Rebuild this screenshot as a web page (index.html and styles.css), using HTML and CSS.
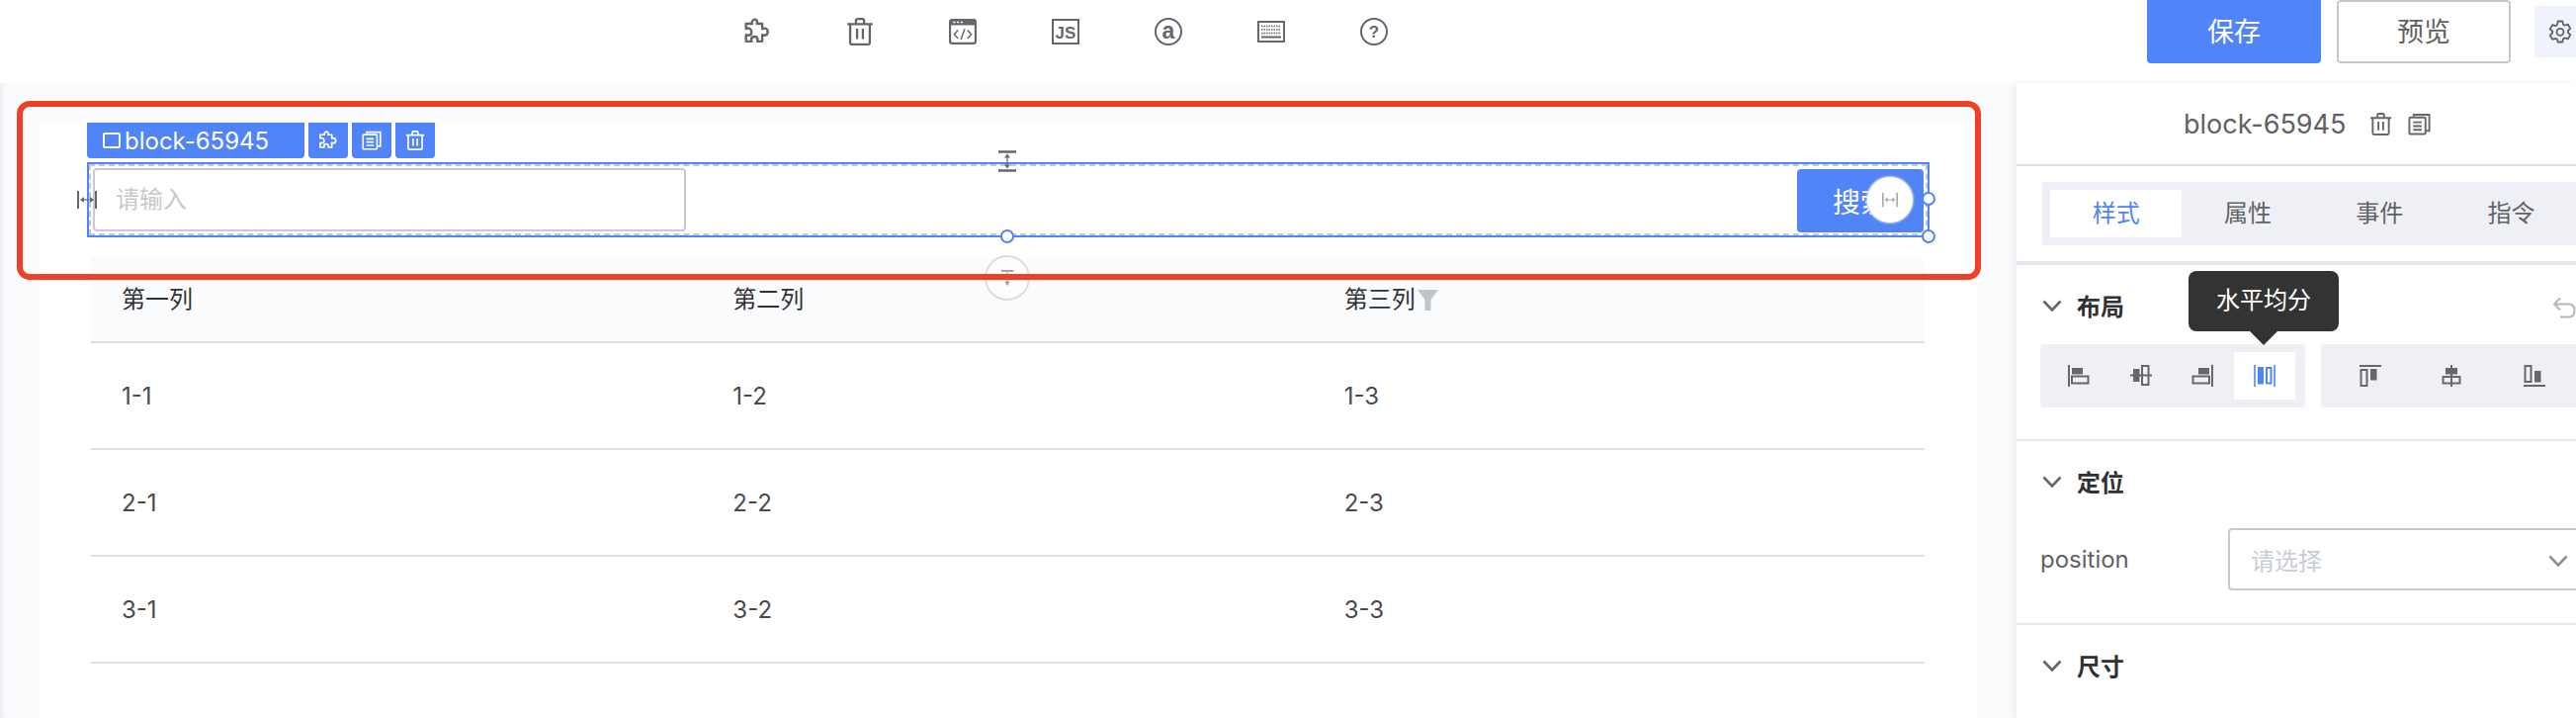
FILE: index.html
```html
<!DOCTYPE html>
<html lang="zh-CN">
<head>
    <meta charset="UTF-8">
    <title>block-65945</title>
    <link rel="stylesheet" href="styles.css">
</head>
<body>
    <svg class="defs" width="0" height="0">
        <defs>
            <symbol id="i-puzzle" viewBox="1 .5 23 23.500">
                <path d="M9 2.500c1.400-1.300 3.600-.5 3.600 1.400 0 .5-.2 1-.4 1.600h4.600v4.400c.6-.3 1.100-.5 1.700-.5 1.900 0 3 1.400 3 3s-1.100 3-3 3c-.6 0-1.100-.2-1.700-.5v5.600h-4.200c.2-.5.3-1 .3-1.400 0-1.700-1.300-2.600-2.700-2.600s-2.700.9-2.700 2.600c0 .4.100.9.300 1.400H3v-5.600c.6.300 1.300.5 1.900.5 1.700 0 2.800-1.300 2.800-2.800S6.600 9.300 4.900 9.300c-.6 0-1.300.2-1.900.5V5.500h5.300C8 4.800 7.800 3.400 9 2.500z" fill="none" stroke="currentColor" stroke-width="2" stroke-linejoin="round"/>
            </symbol>
            <symbol id="i-trash" viewBox="0 0 24 24">
                <path d="M1 5.500h22M8.500 5.500V2.500q0-1.500 1.500-1.500h4q1.500 0 1.500 1.500v3M3.500 5.500v16q0 1.500 1.500 1.500h14q1.500 0 1.500-1.500v-16M9.500 9.500v9M14.500 9.500v9" fill="none" stroke="currentColor" stroke-width="2"/>
            </symbol>
            <symbol id="i-copy" viewBox="0 0 24 24">
                <path d="M6 4V2h16.500v17H19" fill="none" stroke="currentColor" stroke-width="2"/>
                <rect x="1.500" y="5" width="17" height="17.500" rx="1" fill="none" stroke="currentColor" stroke-width="2"/>
                <path d="M5.500 10h9M5.500 14h9M5.500 18h9" stroke="currentColor" stroke-width="2"/>
            </symbol>
            <symbol id="i-down" viewBox="0 0 20 12">
                <path d="M1.500 1.500L10 10.500l8.500-9" fill="none" stroke="currentColor" stroke-width="2.600"/>
            </symbol>
            <symbol id="i-hgap" viewBox="0 0 20 20">
                <path d="M1 1v18M19 1v18" stroke="currentColor" stroke-width="2"/>
                <path d="M4 10h12" stroke="currentColor" stroke-width="1.200"/>
                <path d="M3 10l4-3v6zM17 10l-4-3v6z" fill="currentColor"/>
            </symbol>
            <symbol id="i-vgap" viewBox="0 0 20 22">
                <path d="M1 1.500h18M1 20.500h18" stroke="currentColor" stroke-width="2.400"/>
                <path d="M10 5v12" stroke="currentColor" stroke-width="1.200"/>
                <path d="M10 3.500l-3 4h6zM10 18.500l-3-4h6z" fill="currentColor"/>
            </symbol>
        </defs>
    </svg>

    <header class="topbar">
        <div class="tools">
            <svg class="tool-icon"><use href="#i-puzzle"/></svg>
            <svg class="tool-icon"><use href="#i-trash"/></svg>
            <svg class="tool-icon" viewBox="0 0 26 26">
                <rect x="1" y="2" width="24" height="22" rx="2" fill="none" stroke="currentColor" stroke-width="2"/>
                <path d="M1 3.500q0-2 2-2h20q2 0 2 2V7H1z" fill="currentColor"/>
                <path d="M4 4.200h2M7.500 4.200h2M11 4.200h2" stroke="#fff" stroke-width="1.400"/>
                <path d="M8.500 11.500L5 15.500l3.500 4M17.500 11.500l3.500 4-3.500 4M14.800 10.500l-3.600 10" fill="none" stroke="currentColor" stroke-width="1.400"/>
            </svg>
            <svg class="tool-icon" viewBox="0 0 28 26">
                <rect x="1" y="1" width="26" height="24" fill="none" stroke="currentColor" stroke-width="2"/>
                <text class="js-text" x="14" y="19.500">JS</text>
            </svg>
            <svg class="tool-icon" viewBox="0 0 28 28">
                <circle cx="14" cy="14" r="13" fill="none" stroke="currentColor" stroke-width="2"/>
                <text class="a-text" x="14" y="20.800">a</text>
            </svg>
            <svg class="tool-icon" viewBox="0 0 28 22">
                <rect x="1" y="1" width="26" height="20" fill="none" stroke="currentColor" stroke-width="2"/>
                <path d="M4 5.500h20M4 9h20M4 12.500h20" stroke="currentColor" stroke-width="1.600" stroke-dasharray="1.500 1"/>
                <path d="M4 16.500h20" stroke="currentColor" stroke-width="2"/>
            </svg>
            <svg class="tool-icon" viewBox="0 0 28 28">
                <circle cx="14" cy="14" r="13" fill="none" stroke="currentColor" stroke-width="2"/>
                <text class="q-text" x="14" y="20">?</text>
            </svg>
        </div>
        <button class="btn btn-primary">保存</button>
        <button class="btn btn-plain">预览</button>
        <div class="gear-box">
            <svg class="gear" viewBox="0 0 24 24">
                <path d="M9.600 1.500h4.800l.6 3.100 1.900 1.100 3-1 2.400 4.200-2.400 2.100v2l2.400 2.100-2.400 4.200-3-1-1.900 1.100-.6 3.100H9.600L9 19.900 7.100 18.800l-3 1-2.400-4.200L4.100 13.500v-2L1.700 9.400l2.400-4.200 3 1L9 5.100z" fill="none" stroke="currentColor" stroke-width="1.800" stroke-linejoin="round"/>
                <circle cx="12" cy="12.300" r="3.500" fill="none" stroke="currentColor" stroke-width="1.800"/>
            </svg>
        </div>
    </header>

    <main class="main">
        <section class="canvas">
            <div class="sheet">
                <div class="tagbar">
                    <div class="tag-name"><span class="tag-square"></span>block-65945</div>
                    <div class="tag-btn"><svg class="tag-icon"><use href="#i-puzzle"/></svg></div>
                    <div class="tag-btn"><svg class="tag-icon"><use href="#i-copy"/></svg></div>
                    <div class="tag-btn"><svg class="tag-icon"><use href="#i-trash"/></svg></div>
                </div>
                <div class="selected">
                    <div class="search-row">
                        <div class="input">请输入</div>
                        <button class="search-btn">搜索</button>
                    </div>
                    <svg class="gap-left"><use href="#i-hgap"/></svg>
                    <svg class="gap-top"><use href="#i-vgap"/></svg>
                    <span class="handle handle-right"></span>
                    <span class="handle handle-corner"></span>
                    <span class="handle handle-bottom"></span>
                    <span class="round-btn round-right"><svg class="round-icon"><use href="#i-hgap"/></svg></span>
                    <span class="round-btn round-bottom">
                        <svg class="round-icon-v" viewBox="0 0 18 20">
                            <path d="M2 2h14" stroke="currentColor" stroke-width="2"/>
                            <path d="M9 3v12" stroke="currentColor" stroke-width="1.200"/>
                            <path d="M9 19l-3-5h6z" fill="currentColor"/>
                        </svg>
                    </span>
                </div>
                <table class="table">
                    <thead>
                        <tr>
                            <th>第一列</th>
                            <th>第二列</th>
                            <th>第三列<svg class="filter" viewBox="0 0 21 21"><path d="M0 0h21l-7.500 10v11h-6V10z" fill="currentColor"/></svg></th>
                        </tr>
                    </thead>
                    <tbody>
                        <tr><td>1-1</td><td>1-2</td><td>1-3</td></tr>
                        <tr><td>2-1</td><td>2-2</td><td>2-3</td></tr>
                        <tr><td>3-1</td><td>3-2</td><td>3-3</td></tr>
                    </tbody>
                </table>
            </div>
            <div class="red-box"></div>
        </section>

        <aside class="panel">
            <div class="panel-title">
                <span>block-65945</span>
                <svg class="title-icon"><use href="#i-trash"/></svg>
                <svg class="title-icon"><use href="#i-copy"/></svg>
            </div>
            <div class="tabs">
                <div class="tab active">样式</div>
                <div class="tab">属性</div>
                <div class="tab">事件</div>
                <div class="tab">指令</div>
            </div>

            <div class="group group-layout">
                <div class="group-head">
                    <svg class="chevron"><use href="#i-down"/></svg>
                    <span>布局</span>
                    <svg class="undo" viewBox="0 0 24 22">
                        <path d="M8 1.500L2 7.500l6 6M2 7.500h14.500q6 0 6 6.500t-6 6.500H8" fill="none" stroke="currentColor" stroke-width="2"/>
                    </svg>
                </div>
                <div class="tooltip">水平均分</div>
                <div class="align-row">
                    <div class="align-box align-h">
                        <div class="align-item">
                            <svg class="align-icon" viewBox="0 0 22 22">
                                <path d="M1 0v22" stroke="currentColor" stroke-width="2"/>
                                <rect x="4" y="3" width="11" height="6.500" fill="currentColor"/>
                                <rect x="4" y="11.500" width="16.500" height="7" fill="none" stroke="currentColor" stroke-width="2"/>
                            </svg>
                        </div>
                        <div class="align-item">
                            <svg class="align-icon" viewBox="0 0 22 22">
                                <path d="M0 10.500h22" stroke="currentColor" stroke-width="2"/>
                                <rect x="3" y="4" width="6.500" height="13" fill="currentColor"/>
                                <rect x="12" y="1" width="6.500" height="19" fill="#eff0f5" stroke="currentColor" stroke-width="2"/>
                                <path d="M12 10.500h7" stroke="currentColor" stroke-width="2"/>
                            </svg>
                        </div>
                        <div class="align-item">
                            <svg class="align-icon" viewBox="0 0 22 22">
                                <path d="M21 0v22" stroke="currentColor" stroke-width="2"/>
                                <rect x="7" y="3" width="11" height="6.500" fill="currentColor"/>
                                <rect x="1.500" y="11.500" width="16.500" height="7" fill="none" stroke="currentColor" stroke-width="2"/>
                            </svg>
                        </div>
                        <div class="align-item active">
                            <svg class="align-icon" viewBox="0 0 22 22">
                                <path d="M1 0v22M21 0v22" stroke="currentColor" stroke-width="1.600"/>
                                <rect x="4" y="2" width="6" height="17.500" fill="currentColor"/>
                                <rect x="13" y="3" width="4.500" height="15.500" fill="none" stroke="currentColor" stroke-width="2"/>
                            </svg>
                        </div>
                    </div>
                    <div class="align-box align-v">
                        <div class="align-item">
                            <svg class="align-icon" viewBox="0 0 22 22">
                                <path d="M0 1h22" stroke="currentColor" stroke-width="2"/>
                                <rect x="1.500" y="5" width="6" height="16" fill="none" stroke="currentColor" stroke-width="2"/>
                                <rect x="11" y="4" width="6.500" height="11.500" fill="currentColor"/>
                            </svg>
                        </div>
                        <div class="align-item">
                            <svg class="align-icon" viewBox="0 0 22 22">
                                <path d="M10 0v22" stroke="currentColor" stroke-width="2"/>
                                <rect x="4" y="3" width="12" height="6.500" fill="currentColor"/>
                                <rect x="1.500" y="12" width="17" height="6.500" fill="#eff0f5" stroke="currentColor" stroke-width="2"/>
                                <path d="M10 11v9" stroke="currentColor" stroke-width="2"/>
                            </svg>
                        </div>
                        <div class="align-item">
                            <svg class="align-icon" viewBox="0 0 22 22">
                                <path d="M0 21h22" stroke="currentColor" stroke-width="2"/>
                                <rect x="1.500" y="1" width="6" height="16" fill="none" stroke="currentColor" stroke-width="2"/>
                                <rect x="11" y="6" width="6.500" height="11.500" fill="currentColor"/>
                            </svg>
                        </div>
                    </div>
                </div>
            </div>

            <div class="group group-position">
                <div class="group-head">
                    <svg class="chevron"><use href="#i-down"/></svg>
                    <span>定位</span>
                </div>
                <div class="form-row">
                    <label class="form-label">position</label>
                    <div class="select">
                        <span>请选择</span>
                        <svg class="select-arrow"><use href="#i-down"/></svg>
                    </div>
                </div>
            </div>

            <div class="group">
                <div class="group-head">
                    <svg class="chevron"><use href="#i-down"/></svg>
                    <span>尺寸</span>
                </div>
            </div>
        </aside>
    </main>
</body>
</html>
```

FILE: styles.css
```css
* {
    box-sizing: border-box;
}
html, body {
    margin: 0;
    height: 726px;
    overflow: hidden;
}
body {
    font-family: Inter, "Noto Sans CJK SC", sans-serif;
    color: #303133;
    background: #fff;
}
.defs {
    position: absolute;
}

/* top bar */
.topbar {
    height: 84px;
    display: flex;
    align-items: flex-start;
    background: #fff;
    position: relative;
}
.tools {
    flex: none;
    width: 2172px;
    height: 64px;
    padding-left: 752px;
    display: flex;
    align-items: center;
}
.tool-icon {
    width: 28px;
    height: 28px;
    margin-right: 76px;
    color: #66676c;
}
.js-text, .a-text, .q-text {
    fill: currentColor;
    text-anchor: middle;
    font-family: "Liberation Sans", sans-serif;
    font-weight: 700;
}
.js-text {
    font-size: 17px;
}
.a-text {
    font-size: 23px;
}
.q-text {
    font-size: 17px;
}
.btn {
    flex: none;
    width: 176px;
    height: 64px;
    font-family: inherit;
    font-size: 27px;
    border-radius: 0 0 4px 4px;
    padding: 0 0 3px;
}
.btn-primary {
    background: #5084f8;
    border: none;
    color: #fff;
}
.btn-plain {
    margin-left: 16px;
    background: #fff;
    border: 2px solid #c8c9cc;
    border-radius: 4px;
    color: #606266;
}
.gear-box {
    flex: none;
    margin: 6px 0 0 24px;
    width: 42px;
    height: 52px;
    padding: 14px 0 0 14px;
    background: #f0f3fb;
    border-radius: 4px 0 0 4px;
    color: #606266;
}
.gear {
    width: 24px;
    height: 24px;
    display: block;
}

/* canvas */
.main {
    display: flex;
    height: 642px;
    box-shadow: inset 0 5px 4px -2px #eff0f3;
}
.canvas {
    flex: none;
    width: 2040px;
    padding: 40px 40px 0;
    background: #fafbfd;
    position: relative;
    box-shadow: inset 5px 0 5px -3px #e9eaee;
}
.sheet {
    height: 602px;
    padding: 0 48px;
    background: #fff;
}
.tagbar {
    display: flex;
    gap: 4px;
    height: 36px;
    margin-bottom: 4px;
}
.tag-name, .tag-btn {
    background: #5084f8;
    color: #fff;
    border-radius: 0 0 4px 4px;
}
.tag-name {
    width: 220px;
    padding-left: 16px;
    display: flex;
    align-items: center;
    gap: 4px;
    font-size: 24px;
}
.tag-square {
    width: 18px;
    height: 16px;
    border: 2px solid #fff;
    border-radius: 2px;
}
.tag-btn {
    width: 40px;
    display: flex;
    align-items: center;
    justify-content: center;
}
.tag-icon {
    width: 20px;
    height: 20px;
}
.selected {
    height: 76px;
    border: 2px solid #5084f8;
    position: relative;
}
.search-row {
    height: 72px;
    border: 2px dashed #c8c9cc;
    padding: 2px 2px 0;
    display: flex;
    justify-content: space-between;
    align-items: flex-start;
}
.input {
    width: 600px;
    height: 64px;
    padding-left: 21px;
    border: 2px solid #c8c9cc;
    border-radius: 4px;
    background: #fff;
    font-size: 24px;
    line-height: 60px;
    color: #c8c9cc;
}
.search-btn {
    width: 128px;
    height: 64px;
    margin: 1px 0 0;
    border: none;
    border-radius: 4px;
    background: #5084f8;
    color: #fff;
    font-family: inherit;
    font-size: 28px;
}
.gap-left {
    position: absolute;
    left: -13px;
    top: 26px;
    width: 22px;
    height: 20px;
    color: #66676c;
}
.gap-top {
    position: absolute;
    left: 918px;
    top: -14px;
    width: 22px;
    height: 22px;
    color: #66676c;
}
.handle {
    position: absolute;
    width: 14px;
    height: 14px;
    background: #fff;
    border: 2px solid #5084f8;
    border-radius: 50%;
}
.handle-right {
    right: -8px;
    top: 28px;
}
.handle-corner {
    right: -8px;
    bottom: -8px;
}
.handle-bottom {
    left: 922px;
    bottom: -8px;
}
.round-btn {
    position: absolute;
    width: 46px;
    height: 46px;
    border-radius: 50%;
    background: #fff;
    display: flex;
    justify-content: center;
    align-items: center;
}
.round-right {
    right: 15px;
    top: 13px;
    box-shadow: 0 0 2px 1px #d4d5da;
}
.round-bottom {
    left: 906px;
    top: 92px;
    border: 2px solid #dcdde2;
    background: rgba(255, 255, 255, .6);
    color: #9a9ba1;
}
.round-icon {
    width: 16px;
    height: 16px;
    color: #a9aab0;
}
.round-icon-v {
    width: 16px;
    height: 18px;
}

/* table */
.table {
    width: 1855px;
    margin: 21px 0 0 4px;
    border-collapse: collapse;
    table-layout: fixed;
    font-size: 24px;
    color: #303133;
}
.table th {
    height: 85px;
    padding: 0 0 6px 31px;
    background: #fafbfd;
    border-bottom: 2px solid #dfe0e5;
    font-weight: 400;
    text-align: left;
}
.table td {
    height: 108px;
    padding: 0 0 0 31px;
    border-bottom: 2px solid #dfe0e5;
    color: #484a50;
}
.filter {
    width: 21px;
    height: 21px;
    margin-left: 2px;
    vertical-align: -3px;
    color: #c0c4cc;
}

/* red annotation */
.red-box {
    position: absolute;
    left: 17px;
    top: 18px;
    width: 1987px;
    height: 181px;
    border: 6px solid #ee4024;
    border-radius: 13px;
    pointer-events: none;
}

/* right panel */
.panel {
    flex: none;
    width: 566px;
    background: #fff;
    box-shadow: -3px 0 6px #eceef2;
    overflow: hidden;
    position: relative;
}
.panel-title {
    height: 84px;
    padding-left: 169px;
    display: flex;
    align-items: center;
    border-bottom: 2px solid #dcdfe6;
    font-size: 27px;
    color: #5f6167;
}
.title-icon {
    width: 23px;
    height: 23px;
    margin-left: 16px;
    color: #66676c;
}
.title-icon:nth-of-type(1) {
    margin-left: 24px;
}
.tabs {
    width: 600px;
    height: 64px;
    margin: 16px 0 0 26px;
    padding: 8px;
    display: flex;
    background: #eff0f5;
}
.tab {
    flex: none;
    width: 133.3px;
    height: 48px;
    font-size: 24px;
    line-height: 48px;
    text-align: center;
    color: #606266;
}
.tab.active {
    background: #fff;
    color: #5084f8;
}
.group {
    padding: 0 24px;
    border-top: 2px solid #e4e7ed;
    position: relative;
}
.group-layout {
    height: 180px;
    margin-top: 16px;
    border-top-width: 4px;
}
.group-position {
    height: 186px;
}
.group-head {
    height: 80px;
    display: flex;
    align-items: center;
    font-size: 24px;
    font-weight: 700;
    color: #303133;
}
.chevron {
    flex: none;
    width: 20px;
    height: 12px;
    margin: 2px 15px 0 2px;
    color: #66676c;
}
.undo {
    position: absolute;
    left: 542px;
    top: 32px;
    width: 24px;
    height: 22px;
    color: #b4b6bc;
}
.tooltip {
    position: absolute;
    left: 174px;
    top: 6px;
    width: 152px;
    height: 61px;
    background: #333;
    color: #fff;
    border-radius: 8px;
    font-size: 24px;
    line-height: 60px;
    text-align: center;
}
.tooltip::after {
    content: "";
    position: absolute;
    left: 62px;
    top: 61px;
    border: 14px solid transparent;
    border-top-color: #333;
    border-bottom-width: 0;
}
.align-row {
    display: flex;
    gap: 16px;
    width: 600px;
}
.align-box {
    flex: none;
    display: flex;
    height: 64px;
    background: #eff0f5;
    border-radius: 4px;
}
.align-h {
    width: 268px;
    padding: 8px 10px 8px 8px;
}
.align-v {
    width: 300px;
    padding: 8px;
}
.align-item {
    flex: none;
    display: flex;
    justify-content: center;
    align-items: center;
    color: #66676c;
}
.align-h .align-item {
    width: 62.5px;
}
.align-v .align-item {
    width: 83px;
}
.align-item.active {
    background: #fff;
    color: #5084f8;
}
.align-icon {
    width: 22px;
    height: 22px;
}
.form-row {
    margin-top: 8px;
    display: flex;
    align-items: center;
}
.form-label {
    flex: none;
    width: 190px;
    font-size: 24px;
    color: #5f6167;
}
.select {
    flex: none;
    width: 400px;
    height: 63px;
    padding-left: 21px;
    display: flex;
    align-items: center;
    border: 2px solid #c8c9cc;
    border-radius: 4px;
    font-size: 24px;
    color: #c8cdd6;
    position: relative;
}
.select-arrow {
    position: absolute;
    left: 322px;
    top: 25px;
    width: 20px;
    height: 12px;
    color: #8d8f95;
}
```
